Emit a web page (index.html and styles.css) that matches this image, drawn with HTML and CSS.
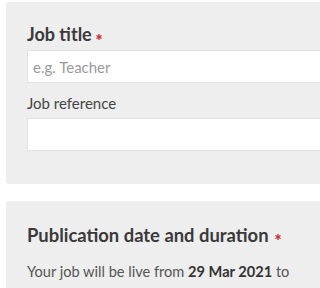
FILE: index.html
```html
<!DOCTYPE html>
<html>
<head>
<meta charset="utf-8">
<link rel="stylesheet" href="styles.css">
</head>
<body>
<div class="page">
  <section class="panel panel-first">
    <label class="field-title">Job title <svg class="req" viewBox="0 0 10 10"><g stroke="#c9302c" stroke-width="2.2" stroke-linecap="round"><line x1="5" y1="1" x2="5" y2="9"/><line x1="1.5" y1="3" x2="8.5" y2="7"/><line x1="1.5" y1="7" x2="8.5" y2="3"/></g></svg></label>
    <div class="input"><span class="placeholder">e.g. Teacher</span></div>
    <label class="field-label">Job reference</label>
    <div class="input input-second"></div>
  </section>
  <section class="panel panel-second">
    <h2 class="section-title">Publication date and duration <svg class="req" viewBox="0 0 10 10"><g stroke="#c9302c" stroke-width="2.2" stroke-linecap="round"><line x1="5" y1="1" x2="5" y2="9"/><line x1="1.5" y1="3" x2="8.5" y2="7"/><line x1="1.5" y1="7" x2="8.5" y2="3"/></g></svg></h2>
    <p class="live">Your job will be live from <strong>29 Mar 2021</strong> to</p>
  </section>
</div>
</body>
</html>
```
FILE: styles.css
```css
html, body {
  margin: 0;
  padding: 0;
  background: #ffffff;
  overflow: hidden;
}
body {
  font-family: Lato, "Open Sans", sans-serif;
  color: #333;
}
.page {
  padding: 2px 0 0 6px;
}
.panel {
  background: #eeeeee;
  border-radius: 3px 0 0 3px;
  padding-left: 21px;
  overflow: hidden;
}
.panel-first {
  padding-top: 21px;
  padding-bottom: 33px;
}
.panel-second {
  margin-top: 17px;
  padding-top: 22px;
  padding-bottom: 20px;
}
.field-title {
  display: block;
  font-size: 18px;
  font-weight: 700;
  line-height: 22px;
  color: #3a3a3a;
}
.req {
  width: 6px;
  height: 6px;
  vertical-align: 1px;
  margin-left: 0;
}
.input {
  background: #fff;
  border: 1px solid #e2e2e2;
  border-right: 0;
  height: 31px;
  margin-top: 5px;
  display: flex;
  align-items: center;
  padding-left: 5px;
}
.placeholder {
  font-size: 15px;
  color: #9a9a9a;
}
.field-label {
  display: block;
  font-size: 15px;
  line-height: 18px;
  color: #444;
  margin-top: 11px;
}
.input-second {
  margin-top: 6px;
}
.section-title {
  margin: 0;
  font-size: 18.4px;
  line-height: 24px;
  font-weight: 700;
  color: #3a3a3a;
  white-space: nowrap;
}
.section-title .req {
  vertical-align: 2px;
  margin-left: 2px;
}
.live {
  margin: 16px 0 0;
  font-size: 14.6px;
  line-height: 18px;
  color: #555;
  white-space: nowrap;
}
.live strong {
  color: #333;
}
```
